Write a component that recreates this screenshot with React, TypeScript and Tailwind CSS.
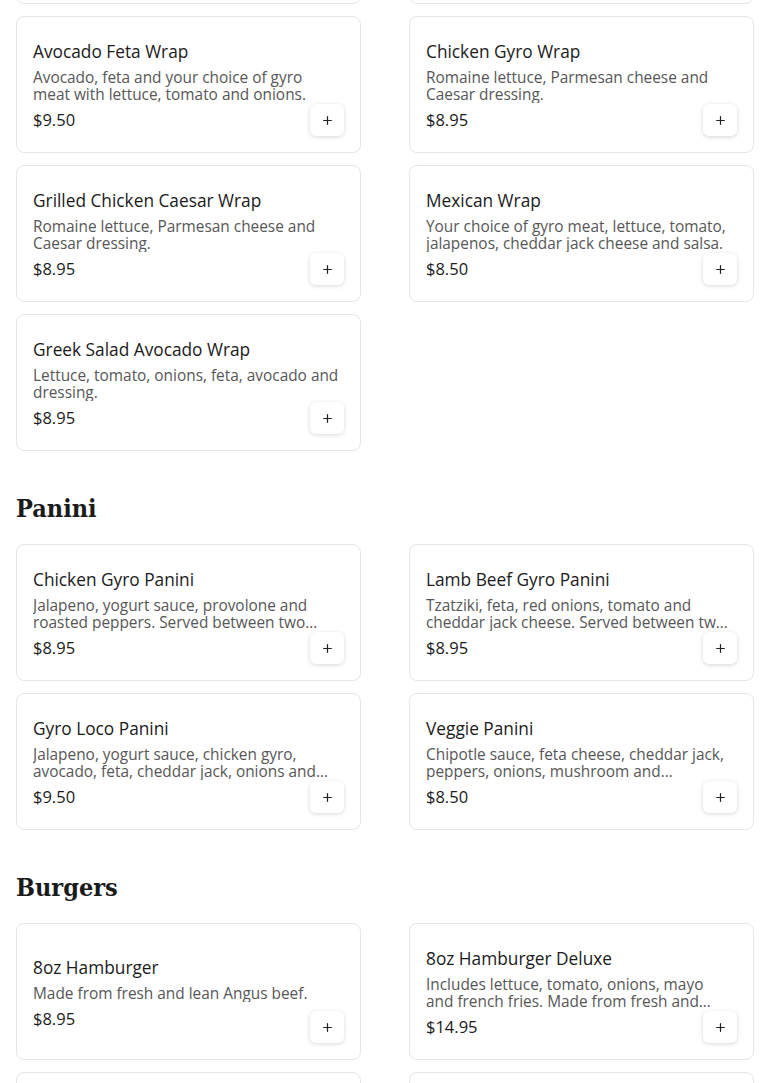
import { Plus } from "lucide-react";

type Item = { name: string; description: string; price: string };

const wraps: Item[] = [
  { name: "Avocado Feta Wrap", description: "Avocado, feta and your choice of gyro meat with lettuce, tomato and onions.", price: "$9.50" },
  { name: "Chicken Gyro Wrap", description: "Romaine lettuce, Parmesan cheese and Caesar dressing.", price: "$8.95" },
  { name: "Grilled Chicken Caesar Wrap", description: "Romaine lettuce, Parmesan cheese and Caesar dressing.", price: "$8.95" },
  { name: "Mexican Wrap", description: "Your choice of gyro meat, lettuce, tomato, jalapenos, cheddar jack cheese and salsa.", price: "$8.50" },
  { name: "Greek Salad Avocado Wrap", description: "Lettuce, tomato, onions, feta, avocado and dressing.", price: "$8.95" },
];

const panini: Item[] = [
  { name: "Chicken Gyro Panini", description: "Jalapeno, yogurt sauce, provolone and roasted peppers. Served between two slices of grilled bread.", price: "$8.95" },
  { name: "Lamb Beef Gyro Panini", description: "Tzatziki, feta, red onions, tomato and cheddar jack cheese. Served between two slices of grilled bread.", price: "$8.95" },
  { name: "Gyro Loco Panini", description: "Jalapeno, yogurt sauce, chicken gyro, avocado, feta, cheddar jack, onions and tomatoes.", price: "$9.50" },
  { name: "Veggie Panini", description: "Chipotle sauce, feta cheese, cheddar jack, peppers, onions, mushroom and tomatoes.", price: "$8.50" },
];

const burgers: Item[] = [
  { name: "8oz Hamburger", description: "Made from fresh and lean Angus beef.", price: "$8.95" },
  { name: "8oz Hamburger Deluxe", description: "Includes lettuce, tomato, onions, mayo and french fries. Made from fresh and lean Angus beef.", price: "$14.95" },
  { name: "8oz Cheeseburger", description: "Made from fresh and lean Angus beef.", price: "$9.50" },
  { name: "8oz Cheeseburger Deluxe", description: "Includes lettuce, tomato, onions, mayo and french fries.", price: "$15.50" },
];

function MenuCard({ item }: { item: Item }) {
  return (
    <div className="relative flex h-[137px] flex-col justify-center rounded-lg border border-[#e6e6e6] bg-white px-4 pt-[3px]">
      <h3 className="text-[17.3px] leading-6 font-medium text-[#1b1b1b]">{item.name}</h3>
      <p className="mt-[5px] line-clamp-2 pr-1 text-[15.4px] leading-[17px] text-[#575757]">{item.description}</p>
      <p className="mt-[5px] text-[16.5px] leading-6 text-[#1b1b1b]">{item.price}</p>
      <button className="absolute right-4 bottom-4 flex h-8 w-[34px] items-center justify-center rounded-md bg-white shadow-[0_1px_4px_rgba(0,0,0,0.16)]">
        <Plus size={13} strokeWidth={2.3} className="text-[#222]" />
      </button>
    </div>
  );
}

function Grid({ items }: { items: Item[] }) {
  return (
    <div className="grid grid-cols-2 gap-x-12 gap-y-3">
      {items.map((item) => (
        <MenuCard key={item.name} item={item} />
      ))}
    </div>
  );
}

function SectionTitle({ children }: { children: string }) {
  return (
    <h2 className="mt-[42px] mb-[19px] h-8 text-[25px] leading-8 font-black text-[#1b1b1b] [font-family:'DejaVu_Serif_Condensed','DejaVu_Serif',serif]">
      {children}
    </h2>
  );
}

export default function App() {
  return (
    <div className="min-h-screen overflow-hidden bg-white px-4 [font-family:'Open_Sans',sans-serif]">
      <div className="mt-[-133px] mb-3">
        <Grid items={[{ name: "Lamb Gyro Wrap", description: "Tzatziki, lettuce, tomato and onions.", price: "$8.95" }, { name: "Falafel Wrap", description: "Hummus, lettuce, tomato and tahini.", price: "$8.50" }]} />
      </div>
      <Grid items={wraps} />
      <SectionTitle>Panini</SectionTitle>
      <Grid items={panini} />
      <SectionTitle>Burgers</SectionTitle>
      <Grid items={burgers} />
    </div>
  );
}
